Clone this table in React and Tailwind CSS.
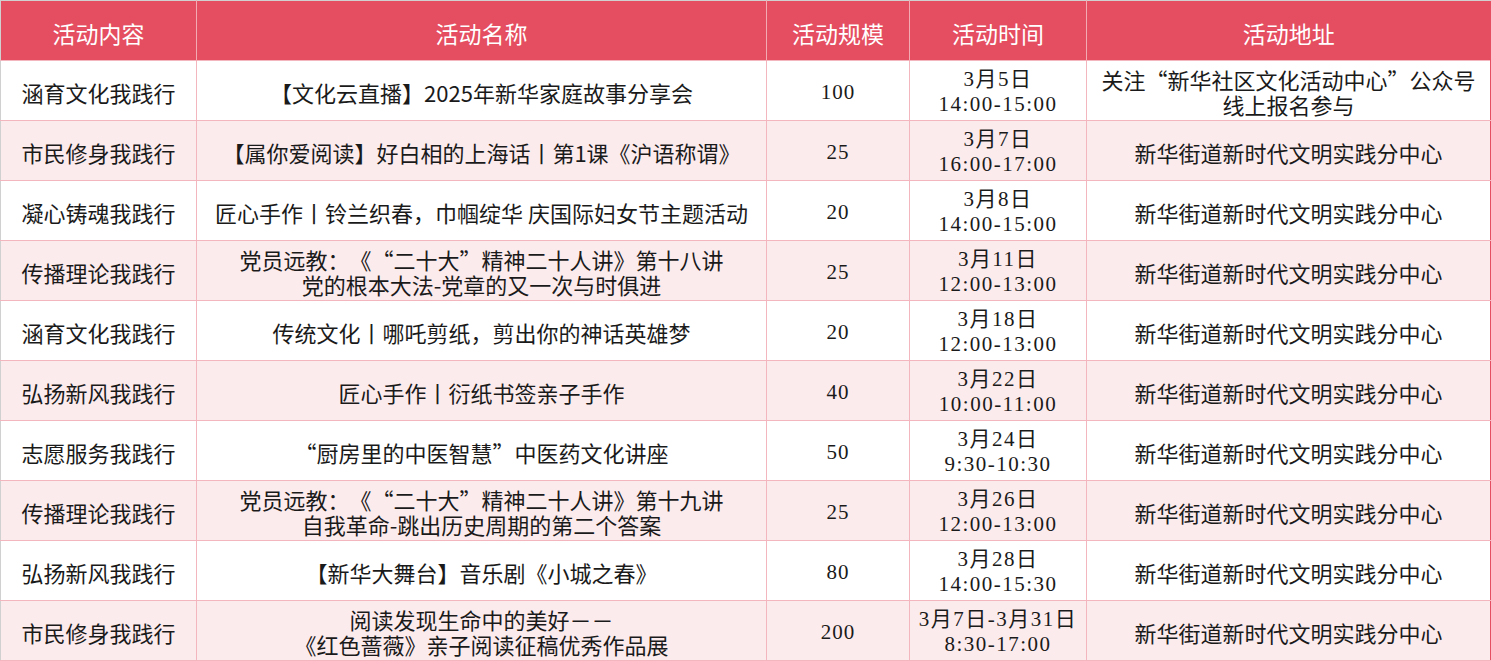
import React from 'react';

const rows = [
  { type: '涵育文化我践行', name: ['【文化云直播】2025年新华家庭故事分享会'], scale: '100', time: ['3月5日', '14:00-15:00'], place: ['关注“新华社区文化活动中心”公众号', '线上报名参与'] },
  { type: '市民修身我践行', name: ['【属你爱阅读】好白相的上海话丨第1课《沪语称谓》'], scale: '25', time: ['3月7日', '16:00-17:00'] },
  { type: '凝心铸魂我践行', name: ['匠心手作丨铃兰织春，巾帼绽华 庆国际妇女节主题活动'], scale: '20', time: ['3月8日', '14:00-15:00'] },
  { type: '传播理论我践行', name: ['党员远教：《“二十大”精神二十人讲》第十八讲', '党的根本大法-党章的又一次与时俱进'], scale: '25', time: ['3月11日', '12:00-13:00'] },
  { type: '涵育文化我践行', name: ['传统文化丨哪吒剪纸，剪出你的神话英雄梦'], scale: '20', time: ['3月18日', '12:00-13:00'] },
  { type: '弘扬新风我践行', name: ['匠心手作丨衍纸书签亲子手作'], scale: '40', time: ['3月22日', '10:00-11:00'] },
  { type: '志愿服务我践行', name: ['“厨房里的中医智慧”中医药文化讲座'], scale: '50', time: ['3月24日', '9:30-10:30'] },
  { type: '传播理论我践行', name: ['党员远教：《“二十大”精神二十人讲》第十九讲', '自我革命-跳出历史周期的第二个答案'], scale: '25', time: ['3月26日', '12:00-13:00'] },
  { type: '弘扬新风我践行', name: ['【新华大舞台】音乐剧《小城之春》'], scale: '80', time: ['3月28日', '14:00-15:30'] },
  { type: '市民修身我践行', name: ['阅读发现生命中的美好－－', '《红色蔷薇》亲子阅读征稿优秀作品展'], scale: '200', time: ['3月7日-3月31日', '8:30-17:00'] },
];

const headers = ['活动内容', '活动名称', '活动规模', '活动时间', '活动地址'];
const widths = ['w-[196px]', 'w-[570px]', 'w-[143px]', 'w-[177px]', ''];

const Lines = ({ lines }) => lines.map((l, i) => <div key={i}>{l}</div>);

export default function App() {
  return (
    <div className="w-[1491px] h-[661px] bg-white overflow-hidden font-['Noto_Sans_CJK_SC','Liberation_Sans',sans-serif] text-[#1a1a1a] [text-spacing-trim:space-all]">
      <table className="w-full table-fixed border-collapse border-t border-l border-t-[#d0d0d0] border-l-[#d0d0d0]">
        <thead>
          <tr className="h-[60px] bg-[#e54d60] text-white">
            {headers.map((h, i) => (
              <th
                key={h}
                className={`${widths[i]} font-normal text-[23px] leading-[26px] pt-[4px] border-r border-[#f2aab3] last:border-r-0 px-0 pb-0`}
              >
                {h}
              </th>
            ))}
          </tr>
        </thead>
        <tbody>
          {rows.map((r, idx) => (
            <tr
              key={idx}
              className={`h-[60px] text-[22px] leading-[25px] text-center ${idx % 2 === 1 ? 'bg-[#fcebed]' : 'bg-white'}`}
            >
              <td className="border border-[#f4b6be] border-l-0 px-0 pt-[3px] pb-0">{r.type}</td>
              <td className="border border-[#f4b6be] px-0 pt-[3px] pb-0">
                <Lines lines={r.name} />
              </td>
              <td className="border border-[#f4b6be] px-0 pt-[3px] pb-0 text-[21px] font-['Liberation_Serif','Noto_Sans_CJK_SC',serif] tracking-[1px]">
                {r.scale}
              </td>
              <td className="border border-[#f4b6be] px-0 pt-[3px] pb-0 text-[21px] font-['Liberation_Serif','Noto_Sans_CJK_SC',serif] tracking-[1.5px]">
                <Lines lines={r.time} />
              </td>
              <td className="border border-[#f4b6be] border-r-[#e54d60] px-0 pt-[3px] pb-0">
                <Lines lines={r.place || ['新华街道新时代文明实践分中心']} />
              </td>
            </tr>
          ))}
        </tbody>
      </table>
    </div>
  );
}
